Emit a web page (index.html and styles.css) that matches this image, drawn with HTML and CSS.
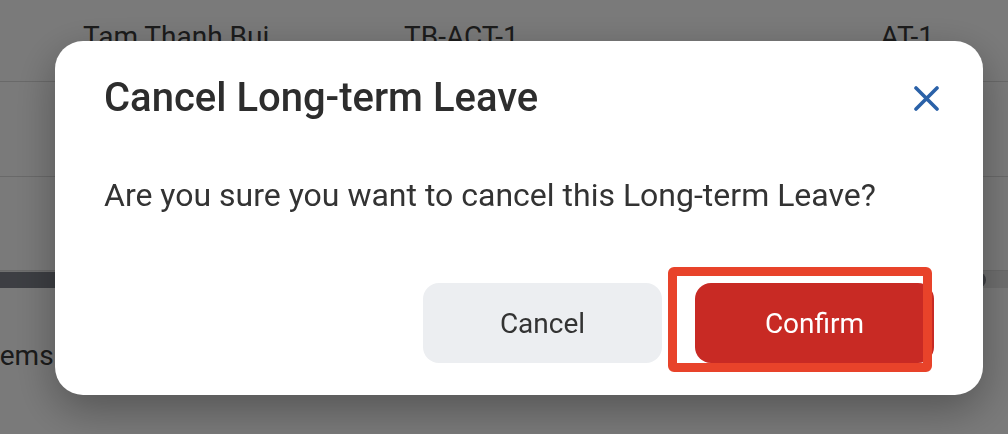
FILE: index.html
```html
<!DOCTYPE html>
<html lang="en">
<head>
    <meta charset="UTF-8">
    <title>Cancel Long-term Leave</title>
    <link rel="stylesheet" href="styles.css">
</head>
<body>
<div class="page">

    <div class="table">
        <div class="row first">
            <span>Tam Thanh Bui</span>
            <span>TB-ACT-1</span>
            <span class="right">AT-1</span>
        </div>
        <div class="row second"></div>
        <div class="row third"></div>
    </div>

    <div class="scrollbar">
        <div class="thumb"></div>
    </div>

    <div class="summary">Items</div>
</div>

<div class="overlay">
    <div class="modal">
        <div class="modal-header">
            <h2>Cancel Long-term Leave</h2>
            <button type="button" class="close" aria-label="Close">
                <svg width="25" height="25" viewBox="0 0 25 25">
                    <path d="M2 2 L23 23 M23 2 L2 23" stroke="#2a61a8" stroke-width="3.6" stroke-linecap="round" fill="none"/>
                </svg>
            </button>
        </div>
        <p class="modal-text">Are you sure you want to cancel this Long-term Leave?</p>
        <div class="modal-buttons">
            <button type="button" class="btn btn-cancel">Cancel</button>
            <div class="confirm-wrap">
                <button type="button" class="btn btn-confirm">Confirm</button>
                <div class="highlight"></div>
            </div>
        </div>
    </div>
</div>
</body>
</html>
```

FILE: styles.css
```css
* {
    box-sizing: border-box;
}

html, body {
    width: 100%;
    height: 100%;
}

body {
    font-family: Roboto, "Liberation Sans", Arial, sans-serif;
    margin: 0;
    padding: 0;
    color: #333;
    overflow: hidden;
    background: #fff;
}

.page {
    display: flex;
    flex-direction: column;
    height: 100%;
}

.row {
    display: grid;
    grid-template-columns: 321px 1fr auto;
    padding: 0 74px 0 83px;
    border-bottom: 1px solid #dcdcdc;
    font-size: 28px;
    line-height: 32px;
    color: #3a3a3a;
}

.row.first {
    height: 82px;
    padding-top: 21px;
}

.row.second {
    height: 95px;
}

.row.third {
    height: 93px;
    border-bottom: none;
}

.row .right {
    text-align: right;
}

.scrollbar {
    height: 18px;
    border-top: 1px solid #dcdcdc;
    background: #e8e8e8;
    padding-top: 1px;
}

.thumb {
    width: 986px;
    height: 16px;
    border-radius: 0 8px 8px 0;
    background: #7f838c;
}

.summary {
    margin: 52px 0 0 -17px;
    font-size: 28px;
    line-height: 32px;
    color: #3a3a3a;
}

.overlay {
    position: fixed;
    top: 0;
    left: 0;
    width: 100%;
    height: 100%;
    background: rgba(0, 0, 0, 0.52);
    display: flex;
    align-items: flex-start;
    padding: 41px 0 0 55px;
}

.modal {
    width: 928px;
    background: #fff;
    border-radius: 28px;
    padding: 33px 48px 32px 49px;
    box-shadow: 0 14px 44px rgba(0, 0, 0, 0.32);
}

.modal-header {
    display: flex;
    justify-content: space-between;
    align-items: center;
}

.modal-header h2 {
    margin: 0;
    font-size: 40px;
    line-height: 48px;
    font-weight: 500;
    color: #2d2d2d;
}

.close {
    border: none;
    background: none;
    padding: 0;
    margin-right: -4px;
    width: 25px;
    height: 25px;
    cursor: pointer;
}

.close svg {
    display: block;
}

.modal-text {
    margin: 54px 0 0;
    font-size: 32px;
    line-height: 38px;
    color: #333;
}

.modal-buttons {
    display: flex;
    justify-content: flex-end;
    gap: 33px;
    margin-top: 69px;
    margin-right: 1px;
}

.btn {
    width: 239px;
    height: 80px;
    border: none;
    border-radius: 16px;
    font-family: Roboto, "Liberation Sans", Arial, sans-serif;
    font-size: 28px;
    cursor: pointer;
}

.btn-cancel {
    background: #eceef1;
    color: #333;
}

.confirm-wrap {
    position: relative;
}

.btn-confirm {
    display: block;
    background: #c82a24;
    color: #fff;
}

.highlight {
    position: absolute;
    left: -27px;
    top: -16px;
    width: 264px;
    height: 105px;
    border: 9px solid #e8432a;
    border-radius: 6px;
}
```
